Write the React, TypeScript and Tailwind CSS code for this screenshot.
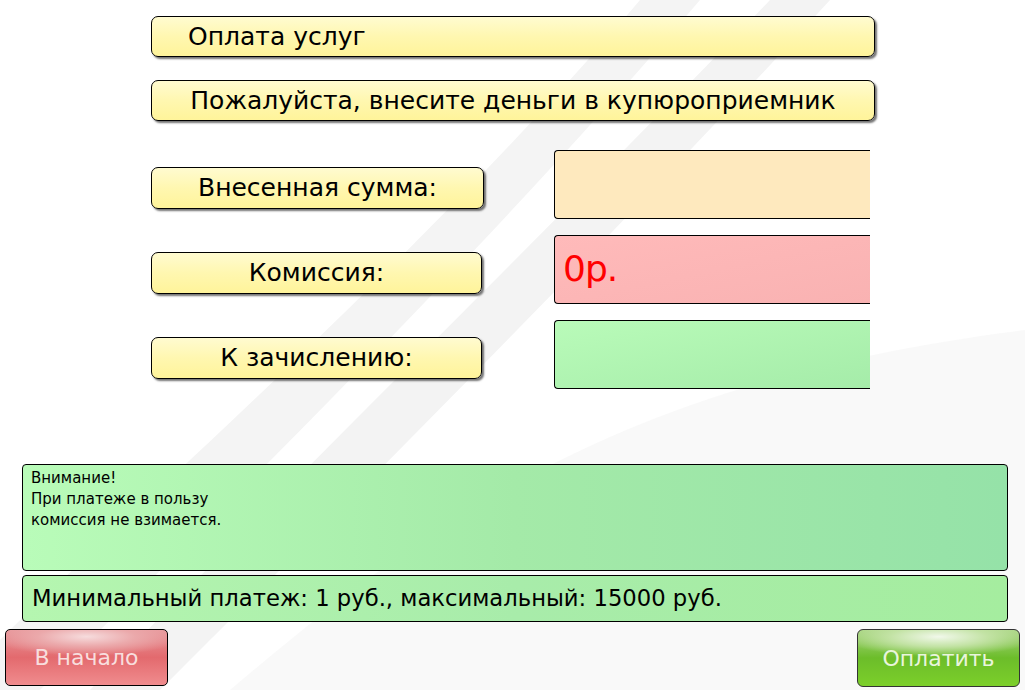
const yellowBox =
  'rounded-[7px] border border-black bg-gradient-to-b from-[#fffbd0] via-[#fff7b0] to-[#fff49a] shadow-[2px_2px_2px_rgba(0,0,0,0.55)] text-black';

const Background = () => (
  <svg className="absolute inset-0 h-full w-full" viewBox="0 0 1025 690" preserveAspectRatio="none">
    <path d="M0,640 C120,520 420,260 640,0 L700,0 C470,270 170,560 40,690 L0,690 Z" fill="#f4f4f4" />
    <path d="M90,690 C300,470 560,220 770,0 L830,0 C620,230 380,470 160,690 Z" fill="#f3f3f3" />
    <path d="M230,690 C430,520 620,380 1025,330 L1025,690 Z" fill="#f6f6f6" opacity="0.7" />
  </svg>
);

const Label = ({ text, w }: { text: string; w: string }) => (
  <div className={`${yellowBox} ${w} h-[42px] flex items-center justify-center text-[25px] leading-none`}>
    {text}
  </div>
);

export default function App() {
  return (
    <div
      className="relative w-[1025px] h-[690px] overflow-hidden bg-white"
      style={{ fontFamily: '"DejaVu Sans", Verdana, sans-serif' }}
    >
      <Background />
      <div className="relative flex h-full flex-col">
        <div className="ml-[151px] mt-[16px] flex w-[724px] flex-col gap-[23px]">
          <div className={`${yellowBox} h-[41px] flex items-center pl-[36px] text-[25px]`}>
            Оплата услуг
          </div>
          <div className={`${yellowBox} h-[41px] flex items-center justify-center text-[25px]`}>
            Пожалуйста, внесите деньги в купюроприемник
          </div>
        </div>

        <div className="ml-[151px] mt-[29px] flex flex-col gap-[16px]">
          <div className="flex items-center">
            <div className="w-[403px] pt-[6px]">
              <Label text="Внесенная сумма:" w="w-[333px]" />
            </div>
            <div className="h-[69px] w-[316px] rounded-l-[4px] border border-r-0 border-black bg-[#fee9be]" />
          </div>
          <div className="flex items-center">
            <div className="w-[403px] pt-[6px]">
              <Label text="Комиссия:" w="w-[331px]" />
            </div>
            <div className="h-[69px] w-[316px] rounded-l-[4px] border border-r-0 border-black bg-gradient-to-br from-[#ffbaba] to-[#f9b2b2] flex items-center pl-[8px] pb-[2px] text-[36px] text-[#ff0000] tracking-[-1px]">
              0р.
            </div>
          </div>
          <div className="flex items-center">
            <div className="w-[403px] pt-[6px]">
              <Label text="К зачислению:" w="w-[331px]" />
            </div>
            <div className="h-[69px] w-[316px] rounded-l-[4px] border border-r-0 border-black bg-gradient-to-br from-[#b9fbb9] to-[#a5eca9]" />
          </div>
        </div>

        <div className="ml-[22px] mt-[75px] flex w-[986px] flex-col gap-[4px]">
          <div className="h-[107px] rounded-[4px] border border-black bg-gradient-to-r from-[#b9fcb9] via-[#a4eaa8] to-[#95e2a8] px-[8px] pt-[3px] text-[15px] leading-[21px]">
            <div>Внимание!</div>
            <div>При платеже в пользу</div>
            <div>комиссия не взимается.</div>
          </div>
          <div className="h-[47px] rounded-[4px] border border-black bg-gradient-to-r from-[#b5f6b0] via-[#a8ecaa] to-[#a5ed9f] flex items-center pl-[9px] text-[22.7px]">
            Минимальный платеж: 1 руб., максимальный: 15000 руб.
          </div>
        </div>

        <div className="mx-[5px] mt-[7px] flex justify-between">
          <div className="h-[57px] w-[163px] rounded-[5px] border border-black bg-[radial-gradient(ellipse_60%_35%_at_50%_12%,#f6dcdd_0%,#eba9ab_50%,transparent_100%),linear-gradient(#e7969a,#e36a6e_50%,#f08c8e)] flex items-center justify-center text-[22px] text-[#f8dede]">
            В начало
          </div>
          <div className="h-[58px] w-[163px] rounded-[6px] border border-[#333] bg-[radial-gradient(ellipse_60%_35%_at_50%_12%,#f1f8ea_0%,#c3e3a5_50%,transparent_100%),linear-gradient(#a8d482,#6cbd2a_50%,#7ccf2a)] flex items-center justify-center text-[22px] text-[#e9f5dc]">
            Оплатить
          </div>
        </div>
      </div>
    </div>
  );
}
